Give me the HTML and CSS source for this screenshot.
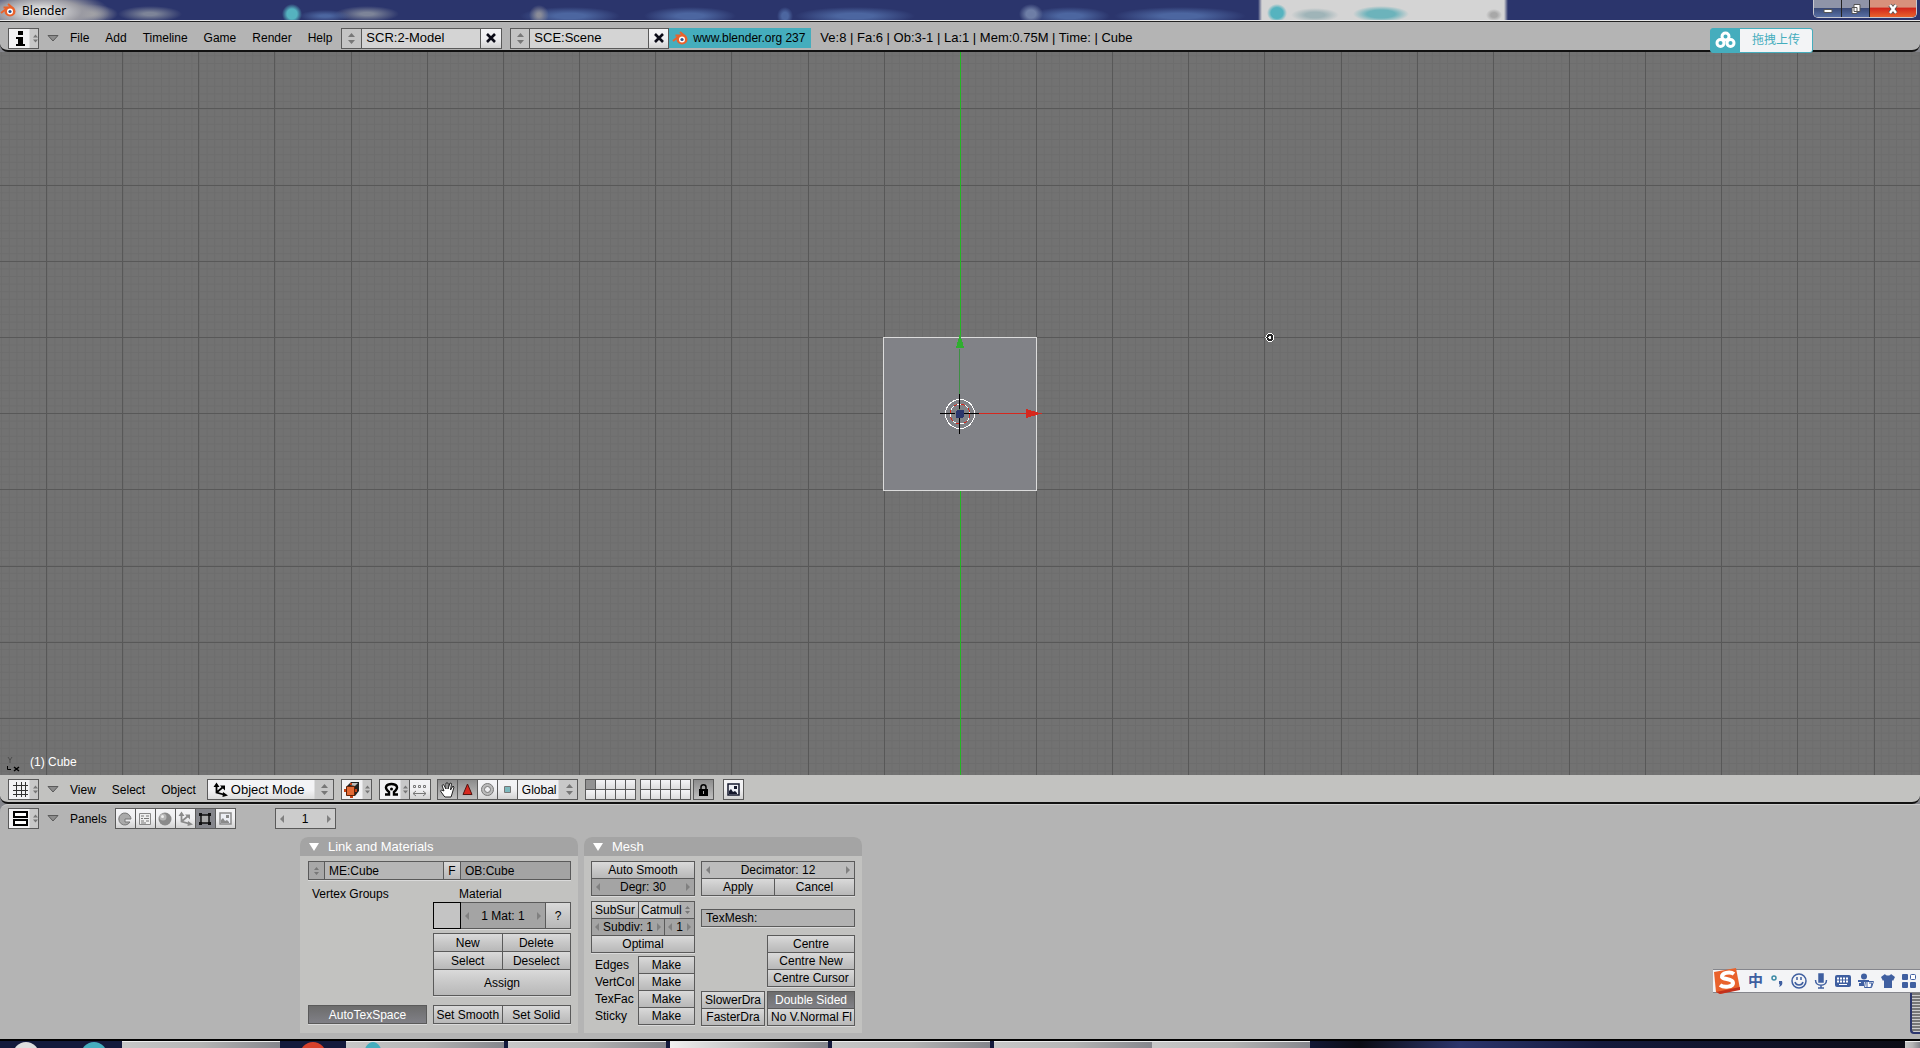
FILE: index.html
```html
<!DOCTYPE html>
<html lang="en">
<head>
	<meta charset="UTF-8">
	<title>Blender</title>
	<link rel="stylesheet" href="styles.css">
</head>
<body>

	<!-- shared icons -->
	<svg class="defs" width="0" height="0">
		<symbol id="updown" viewBox="0 0 7 11"><path d="M0 4h7L3.500 0zM0 7h7L3.500 11z"/></symbol>
		<symbol id="fold" viewBox="0 0 12 7"><path d="M1 .5h10L6 6z" fill="#8c8c8c" stroke="#5a5a5a"/></symbol>
		<symbol id="cross" viewBox="0 0 10 10"><path d="M1 1l8 8M9 1l-8 8" stroke="#0c0c18" stroke-width="2.600"/></symbol>
		<symbol id="logo" viewBox="0 0 16 14">
			<path d="M1 10L8 4.500H3.500M8 1l6 5" fill="none" stroke="#e9622c" stroke-width="2"/>
			<ellipse cx="10" cy="8.500" rx="5.500" ry="5" fill="#e9622c"/>
			<circle cx="10" cy="8.500" r="3" fill="#fff"/>
			<circle cx="10" cy="8.500" r="1.600" fill="#2b4f8c"/>
		</symbol>
		<symbol id="axes" viewBox="0 0 15 15"><path d="M3.500 3v7.500l9 2.500M3.500 10.500l6-5" fill="none" stroke="currentColor" stroke-width="1.800"/><path d="M.5 5l3-4.500 3 4.500zM7 3.500h5v5zM10 10l5 3.500-5.500 1.500z" fill="currentColor"/></symbol>
		<symbol id="image" viewBox="0 0 13 13"><path d="M1 1h11v11H1z" fill="#eceef4" stroke="currentColor" stroke-width="1.500"/><path d="M2 11V8l2-2 2 3 2-1 2 2v1zM7 3h3v3H7z" fill="currentColor"/></symbol>
	</svg>

	<header class="titlebar">
		<svg class="titlebar-logo" width="16" height="14"><use href="#logo"/></svg>
		<h1>Blender</h1>
		<div class="window-buttons">
			<button type="button" aria-label="Minimize"><svg width="12" height="12"><path d="M2 6.500h8v3H2z" fill="#fff" stroke="#555"/></svg></button>
			<button type="button" aria-label="Restore"><svg width="12" height="12"><path d="M4 1.500h6v7H4zM2 4.500h5v6H2z" fill="#fff" stroke="#555"/></svg></button>
			<button type="button" class="close" aria-label="Close"><svg width="14" height="12"><path d="M4 2l6 8M10 2l-6 8" stroke="#555" stroke-width="4"/><path d="M4 2l6 8M10 2l-6 8" stroke="#fff" stroke-width="2.400"/></svg></button>
		</div>
	</header>

	<!-- info header -->
	<nav class="bar info-bar">
		<button type="button" class="editor-type" aria-label="Info window">
			<svg width="21" height="19"><path d="M8 2h5v4H8zM6 8h7v7h2v2H6v-2h2v-5H6z" fill="#000"/></svg>
			<svg class="arrows" width="5" height="9"><use href="#updown"/></svg>
		</button>
		<svg class="fold" width="12" height="7"><use href="#fold"/></svg>
		<a href="#">File</a>
		<a href="#">Add</a>
		<a href="#">Timeline</a>
		<a href="#">Game</a>
		<a href="#">Render</a>
		<a href="#">Help</a>
		<div class="group screen-group">
			<button type="button" class="dim" aria-label="Browse screens"><svg class="arrows" width="7" height="11"><use href="#updown"/></svg></button>
			<input type="text" value="SCR:2-Model" aria-label="Screen">
			<button type="button" aria-label="Delete screen"><svg width="10" height="10"><use href="#cross"/></svg></button>
		</div>
		<div class="group scene-group">
			<button type="button" class="dim" aria-label="Browse scenes"><svg class="arrows" width="7" height="11"><use href="#updown"/></svg></button>
			<input type="text" value="SCE:Scene" aria-label="Scene">
			<button type="button" aria-label="Delete scene"><svg width="10" height="10"><use href="#cross"/></svg></button>
		</div>
		<a class="site" href="#"><svg width="16" height="14"><use href="#logo"/></svg>www.blender.org 237</a>
		<p class="stats">Ve:8 | Fa:6 | Ob:3-1 | La:1 | Mem:0.75M | Time: | Cube</p>
		<button type="button" class="upload">
			<svg width="29" height="23" fill="none" stroke="#fff" stroke-width="3"><circle cx="14.500" cy="7.500" r="3.500"/><circle cx="9.500" cy="14" r="3.500"/><circle cx="19.500" cy="14" r="3.500"/></svg>
			<span>拖拽上传</span>
		</button>
	</nav>

	<!-- 3D view -->
	<main class="view3d">
		<svg class="scene" viewBox="0 0 1920 723" preserveAspectRatio="xMidYMid slice">
			<defs>
				<pattern id="minor" width="7.610" height="7.610" patternUnits="userSpaceOnUse" x="960" y="361">
					<path d="M0 .5h8M.5 0v8" stroke="#6d6d6d"/>
				</pattern>
			</defs>
			<rect width="1920" height="723" fill="#727272"/>
			<rect width="1920" height="723" fill="url(#minor)"/>
			<g stroke="#585858">
				<path d="M0 56.500h1920M0 133.500h1920M0 209.500h1920M0 285.500h1920M0 361.500h1920M0 437.500h1920M0 514.500h1920M0 590.500h1920M0 666.500h1920"/>
				<path d="M46.500 0v723M122.500 0v723M198.500 0v723M274.500 0v723M351.500 0v723M427.500 0v723M503.500 0v723M579.500 0v723M655.500 0v723M731.500 0v723M808.500 0v723M884.500 0v723"/>
				<path d="M1036.500 0v723M1112.500 0v723M1188.500 0v723M1264.500 0v723M1341.500 0v723M1417.500 0v723M1493.500 0v723M1569.500 0v723M1645.500 0v723M1721.500 0v723M1797.500 0v723M1874.500 0v723"/>
			</g>
			<path d="M960.500 0v723" stroke="#22b822"/>
			<rect x="883.500" y="285.500" width="153" height="153" fill="#818287" stroke="#dcdcdc"/>
			<path d="M959.500 361v-64" stroke="#3f8f45"/>
			<path d="M956 296l4-15 4 15z" fill="#2fae2f"/>
			<path d="M979 361.500h48" stroke="#d6281e"/>
			<path d="M1026 357l16 4.500-16 4.500z" fill="#d6281e"/>
			<circle cx="960" cy="362" r="14.500" fill="none" stroke="#fff"/>
			<circle cx="960" cy="362" r="10" fill="none" stroke="#fff"/>
			<circle cx="960" cy="362" r="10" fill="none" stroke="#d6281e" stroke-dasharray="4 4"/>
			<path d="M940 361.500h15M964 361.500h15M959.500 342v15M959.500 366v16" stroke="#000"/>
			<rect x="956" y="358" width="8" height="8" rx="2" fill="#2b356c"/>
			<!-- lamp -->
			<circle cx="1270" cy="285.500" r="4" fill="#222" stroke="#fff"/>
			<circle cx="1270" cy="285.500" r="1.500" fill="#fff"/>
		</svg>
		<svg class="axis-hint" width="14" height="16" fill="none" stroke="#000"><path d="M2 0l2 3 2-3M4 3v3" stroke="#4c4c4c"/><path d="M1.500 9v3.500H5"/><path d="M8 10l5 4M13 10l-5 4" stroke-width="1.500"/></svg>
		<span class="object-name">(1) Cube</span>
	</main>

	<nav class="bar view-bar">
		<button type="button" class="editor-type" aria-label="3D view window">
			<svg width="21" height="19"><path d="M3 5.500h15M3 10.500h15M3 14.500h15M6.500 2v15M11.500 2v15M15.500 2v15" stroke="#333"/></svg>
			<svg class="arrows" width="5" height="9"><use href="#updown"/></svg>
		</button>
		<svg class="fold" width="12" height="7"><use href="#fold"/></svg>
		<a href="#">View</a>
		<a href="#">Select</a>
		<a href="#">Object</a>
		<label class="dropdown mode">
			<svg width="15" height="15"><use href="#axes"/></svg>
			<select aria-label="Mode"><option>Object Mode</option></select>
			<svg class="arrows" width="7" height="11"><use href="#updown"/></svg>
		</label>
		<button type="button" class="editor-type draw-type" aria-label="Draw type">
			<svg width="21" height="19"><path d="M5 6l4-4h8v9l-4 5H5z" fill="#222"/><path d="M8 5l2-2h6l-3 3z" fill="#bbb"/><path d="M4.500 6.500h8v9h-8z" fill="#e26a35" stroke="#5d2209"/><path d="M2 9h2v3H2zM13 9h2v3h-2zM8 16h3v2H8zM8 3h2v2H8z" fill="#c23f12"/></svg>
			<svg class="arrows" width="5" height="9"><use href="#updown"/></svg>
		</button>
		<div class="group magnet-group">
			<button type="button" class="editor-type" aria-label="Pivot">
				<svg width="21" height="19"><path d="M4 14.500h4V12C2 7 6 4 10.500 4S19 7 13 12v2.500h4" fill="none" stroke="#000" stroke-width="2.400"/><circle cx="10.500" cy="9" r="1.500"/></svg>
				<svg class="arrows" width="5" height="9"><use href="#updown"/></svg>
			</button>
			<button type="button" aria-label="Move centers only"><svg width="15" height="14" fill="none" stroke="#777"><path d="M1.500 2.500h2v2h-2zM6.500 2.500h2v2h-2zM11.500 2.500h2v2h-2zM1 10.500h13M4 8l-3 2.500L4 13M11 8l3 2.500-3 2.500"/></svg></button>
		</div>
		<div class="group manipulators">
			<button type="button" class="on" aria-label="Manipulator"><svg width="17" height="17"><path d="M5 15L1.500 10l1-1L5 10 3 4.500l1.500-1L7 8V2h2v6l2-6 1.500.5L11.500 9 14 5l1 1-2 7-1 3H6z" fill="#fff" stroke="#222"/></svg></button>
			<button type="button" class="on" aria-label="Translate"><svg width="15" height="15"><path d="M7.500 2L12 12.500H3z" fill="#d6281e" stroke="#531410"/></svg></button>
			<button type="button" aria-label="Rotate"><svg width="15" height="15" fill="none" stroke="#777"><circle cx="7.500" cy="7.500" r="4.500" stroke="#bbb" stroke-width="3"/><circle cx="7.500" cy="7.500" r="6"/><circle cx="7.500" cy="7.500" r="3"/></svg></button>
			<button type="button" aria-label="Scale"><svg width="15" height="15"><path d="M4.500 4.500h6v6h-6z" fill="#7bb8bd" stroke="#777"/></svg></button>
			<label class="dropdown">
				<select aria-label="Orientation"><option>Global</option></select>
				<svg class="arrows" width="7" height="11"><use href="#updown"/></svg>
			</label>
		</div>
		<div class="layers">
			<input type="checkbox" aria-label="Layer 1" checked><input type="checkbox" aria-label="Layer 2"><input type="checkbox" aria-label="Layer 3"><input type="checkbox" aria-label="Layer 4"><input type="checkbox" aria-label="Layer 5">
			<input type="checkbox" aria-label="Layer 11"><input type="checkbox" aria-label="Layer 12"><input type="checkbox" aria-label="Layer 13"><input type="checkbox" aria-label="Layer 14"><input type="checkbox" aria-label="Layer 15">
		</div>
		<div class="layers">
			<input type="checkbox" aria-label="Layer 6"><input type="checkbox" aria-label="Layer 7"><input type="checkbox" aria-label="Layer 8"><input type="checkbox" aria-label="Layer 9"><input type="checkbox" aria-label="Layer 10">
			<input type="checkbox" aria-label="Layer 16"><input type="checkbox" aria-label="Layer 17"><input type="checkbox" aria-label="Layer 18"><input type="checkbox" aria-label="Layer 19"><input type="checkbox" aria-label="Layer 20">
		</div>
		<div class="group lock-group">
			<button type="button" class="on" aria-label="Lock layers"><svg width="11" height="14"><path d="M3 7V4c0-3 5-3 5 0v3" fill="none" stroke="#000" stroke-width="1.500"/><path d="M1 6h9v7H1z"/><path d="M5 8h1v3H5z" fill="#aaa"/></svg></button>
		</div>
		<div class="group render-group">
			<button type="button" aria-label="Render window"><svg class="dark" width="13" height="13"><use href="#image"/></svg></button>
		</div>
	</nav>

	<!-- buttons window -->
	<section class="buttons-window">
		<nav class="bar panels-bar">
			<button type="button" class="editor-type" aria-label="Buttons window">
				<svg width="21" height="19" fill="#fff" stroke="#000" stroke-width="2"><path d="M4 3h13v5H4zM4 11h13v5H4z"/></svg>
				<svg class="arrows" width="5" height="9"><use href="#updown"/></svg>
			</button>
			<svg class="fold" width="12" height="7"><use href="#fold"/></svg>
			<a href="#">Panels</a>
			<div class="group contexts">
				<button type="button" aria-label="Logic"><svg width="14" height="14"><path d="M12 4a6 6 0 1 0 0 6H7V7h6a6 6 0 0 0-1-3z" fill="#aaa" stroke="#777"/></svg></button>
				<button type="button" aria-label="Script"><svg width="14" height="14"><path d="M1.500 1.500h11v11h-11z" fill="#eee" stroke="#888"/><path d="M3 4h3M8 4h3M3 6.500h2M6 6.500h5M3 9h3M8 9h3M3 11h5" stroke="#777"/></svg></button>
				<button type="button" aria-label="Shading"><svg width="14" height="14"><circle cx="7" cy="7" r="6.500" fill="#8a8a8a"/><circle cx="5" cy="5" r="3.500" fill="#b5b5b5"/><circle cx="4.500" cy="4.500" r="1.500" fill="#eee"/></svg></button>
				<button type="button" class="grey" aria-label="Object"><svg width="15" height="15"><use href="#axes"/></svg></button>
				<button type="button" class="active" aria-label="Editing"><svg width="14" height="14"><path d="M3 3h8v8H3z" fill="#aaa" stroke="#111" stroke-width="1.500"/><path d="M1 1h3v3H1zM10 1h3v3h-3zM1 10h3v3H1zM10 10h3v3h-3z" fill="#111"/></svg></button>
				<button type="button" class="grey" aria-label="Scene"><svg width="13" height="13"><use href="#image"/></svg></button>
			</div>
			<div class="group frame"><div class="number"><span class="left"></span><input type="text" value="1" aria-label="Frame"><span class="right"></span></div></div>
		</nav>

		<div class="panels">
			<section class="panel">
				<h2>Link and Materials</h2>
				<div class="panel-body">
					<div class="group link-row">
						<button type="button" class="mid" aria-label="Browse meshes"><svg class="arrows" width="5" height="8"><use href="#updown"/></svg></button>
						<input type="text" value="ME:Cube" aria-label="Mesh name">
						<button type="button">F</button>
						<input class="ob" type="text" value="OB:Cube" aria-label="Object name">
					</div>
					<div class="link-columns">
						<div class="vertex-groups">
							<h3>Vertex Groups</h3>
							<div class="group"><button type="button" class="pressed">AutoTexSpace</button></div>
						</div>
						<div class="materials">
							<h3>Material</h3>
							<div class="group material-row">
								<button type="button" class="swatch" aria-label="Material color"></button>
								<div class="number"><span class="left"></span><input type="text" value="1 Mat: 1" aria-label="Material index"><span class="right"></span></div>
								<button type="button">?</button>
							</div>
							<div class="group pair material-buttons">
								<button type="button">New</button>
								<button type="button">Delete</button>
								<button type="button">Select</button>
								<button type="button">Deselect</button>
								<button type="button" class="assign">Assign</button>
							</div>
							<div class="group pair">
								<button type="button">Set Smooth</button>
								<button type="button">Set Solid</button>
							</div>
						</div>
					</div>
				</div>
			</section>

			<section class="panel">
				<h2>Mesh</h2>
				<div class="panel-body mesh-columns">
					<div class="mesh-left">
						<div class="group">
							<button type="button">Auto Smooth</button>
							<div class="number"><span class="left"></span><input type="text" value="Degr: 30" aria-label="Degrees"><span class="right"></span></div>
						</div>
						<div class="group subsurf">
							<button type="button">SubSur</button>
							<label class="dropdown"><select aria-label="Subdivision type"><option>Catmull</option></select><svg class="arrows" width="5" height="8"><use href="#updown"/></svg></label>
							<div class="number subdiv"><span class="left"></span><input type="text" value="Subdiv: 1" aria-label="Subdivisions"><span class="right"></span></div>
							<div class="number"><span class="left"></span><input type="text" value="1" aria-label="Render subdivisions"><span class="right"></span></div>
							<button type="button" class="optimal">Optimal</button>
						</div>
						<div class="make">
							<div class="make-labels"><span>Edges</span><span>VertCol</span><span>TexFac</span><span>Sticky</span></div>
							<div class="group">
								<button type="button" aria-label="Make edges">Make</button>
								<button type="button" aria-label="Make vertex colors">Make</button>
								<button type="button" aria-label="Make texture faces">Make</button>
								<button type="button" aria-label="Make sticky">Make</button>
							</div>
						</div>
					</div>
					<div class="mesh-right">
						<div class="group decimator">
							<div class="number light wide"><span class="left"></span><input type="text" value="Decimator: 12" aria-label="Decimator"><span class="right"></span></div>
							<button type="button">Apply</button>
							<button type="button">Cancel</button>
						</div>
						<div class="group texmesh"><input type="text" value="TexMesh:" aria-label="TexMesh"></div>
						<div class="group centre">
							<button type="button">Centre</button>
							<button type="button">Centre New</button>
							<button type="button">Centre Cursor</button>
						</div>
						<div class="draw-row">
							<div class="group">
								<button type="button">SlowerDra</button>
								<button type="button">FasterDra</button>
							</div>
							<div class="group">
								<button type="button" class="pressed">Double Sided</button>
								<button type="button" class="flip">No V.Normal Fl</button>
							</div>
						</div>
					</div>
				</div>
			</section>
		</div>

		<!-- desktop widgets floating over the window -->
		<div class="tray-meter"></div>
		<div class="ime">
			<svg class="ime-logo" width="28" height="28"><path d="M1 5L23 1l4 21-20 5-4-2z" fill="#e9622c"/><path d="M3 25l24-5v3L7 27z" fill="#c2301c"/><path d="M21 7c-4-3-13-1-12 3 1 3 11 1 11 6 0 4-9 5-13 2" fill="none" stroke="#fff" stroke-width="4"/></svg>
			<span>中</span>
			<svg width="14" height="16"><circle cx="4" cy="5" r="2" fill="none" stroke="#3b8aa5" stroke-width="1.500"/><path d="M9 8h3c1 3 0 5-3 6 1-2 1-3 0-3z" fill="#3f5fa0"/></svg>
			<svg width="16" height="16" fill="none" stroke="#3f5fa0" stroke-width="1.500"><circle cx="8" cy="8" r="7"/><path d="M4 9c1 4 7 4 8 0M6 4v3M10 4v3"/></svg>
			<svg width="14" height="16" fill="none" stroke="#3f5fa0" stroke-width="1.500"><path d="M5 1h4v8H5z" fill="#3f5fa0"/><path d="M1.500 7c0 7 11 7 11 0M7 12v3M4 15h6"/></svg>
			<svg width="16" height="12"><rect width="16" height="12" rx="2" fill="#3f5fa0"/><path d="M2 3.500h12M2 6.500h12" stroke="#fff" stroke-width="2" stroke-dasharray="2 1"/><path d="M4 9.500h8" stroke="#fff"/></svg>
			<svg width="16" height="16" fill="#3f5fa0"><circle cx="6" cy="3.500" r="3"/><path d="M0 7h11v2H6v4H1V10h2V9H0z"/><path d="M7.500 8.500h8l-2 6h-7z" fill="#fff" stroke="#3f5fa0"/><path d="M9 9v5M11 10h3l-1 4" fill="none" stroke="#3f5fa0"/></svg>
			<svg width="14" height="14" fill="#3f5fa0"><path d="M0 3l4-3c1 2 5 2 6 0l4 3-2 4-1-1v8H3V6L2 7z"/></svg>
			<svg width="14" height="14" fill="#3f5fa0"><rect width="6" height="6" rx="1"/><rect x="8.500" y=".5" width="5" height="5" rx="1" fill="#fff" stroke="#3f5fa0"/><rect y="8" width="6" height="6" rx="1"/><rect x="8" y="8" width="6" height="6" rx="1"/></svg>
		</div>
	</section>

	<footer class="taskbar">
		<div class="quick"><i class="orb"></i><i class="bird"></i></div>
		<button type="button" class="joined" aria-label="Task 1"></button>
		<div class="pinned"><i class="red"></i></div>
		<button type="button" aria-label="Task 2"><i class="teal"></i></button>
		<button type="button" aria-label="Task 3"></button>
		<button type="button" class="lit" aria-label="Task 4"></button>
		<button type="button" aria-label="Task 5"></button>
		<button type="button" class="joined" aria-label="Task 6"></button>
		<button type="button" aria-label="Task 7"></button>
		<span class="clock">14:51</span>
		<button type="button" class="show-desktop" aria-label="Show desktop"></button>
	</footer>

</body>
</html>
```

FILE: styles.css
```css
/* all */
* {
	margin: 0;
	padding: 0;
	box-sizing: border-box;
}

body {
	display: flex;
	flex-direction: column;
	height: 100vh;
	overflow: hidden;
	background: #85868c;
	color: #000;
	font: 12px/16px "Liberation Sans", "Noto Sans CJK SC", sans-serif;
}

button, input, select {
	font: inherit;
	color: inherit;
	border: 0;
	border-radius: 0;
	min-width: 0;
}

button, .dropdown {
	display: flex;
	align-items: center;
	justify-content: center;
	white-space: nowrap;
	overflow: hidden;
	background: linear-gradient(#f4f4f6, #f0f0f2 50%, #d2d2d2);
}

select {
	appearance: none;
	background: none;
}

svg {
	flex: none;
}

.defs {
	position: absolute;
}

.arrows {
	fill: #777;
}

/* title bar */
.titlebar {
	display: flex;
	flex: none;
	height: 20px;
	overflow: hidden;
	background:
		radial-gradient(ellipse 70px 22px at 40px 12px, #dcdcdc 20%, #9a9aa2 60%, transparent),
		radial-gradient(ellipse 30px 10px at 88px 14px, #aaa 20%, transparent),
		radial-gradient(ellipse 32px 8px at 150px 14px, #7d8498 20%, transparent),
		radial-gradient(ellipse 10px 10px at 292px 14px, #55b3bf 50%, transparent),
		radial-gradient(ellipse 26px 6px at 325px 16px, #4c66a0 20%, transparent),
		radial-gradient(ellipse 32px 8px at 367px 14px, #7d8498 20%, transparent),
		radial-gradient(ellipse 10px 10px at 539px 15px, #8a8c98 20%, transparent),
		radial-gradient(ellipse 50px 9px at 570px 16px, #4c66a0 30%, transparent),
		radial-gradient(ellipse 46px 9px at 690px 16px, #4c66a0 30%, transparent),
		radial-gradient(ellipse 8px 9px at 785px 16px, #4c66a0 40%, transparent),
		radial-gradient(ellipse 60px 9px at 855px 16px, #4c66a0 30%, transparent),
		radial-gradient(ellipse 12px 10px at 1031px 14px, #6e7ea6 40%, transparent),
		radial-gradient(ellipse 40px 9px at 1070px 16px, #4c66a0 30%, transparent),
		radial-gradient(ellipse 66px 9px at 1180px 16px, #4c66a0 30%, transparent),
		radial-gradient(ellipse 10px 9px at 1277px 13px, #55b3bf 60%, transparent),
		radial-gradient(ellipse 24px 7px at 1315px 15px, #9fb4b8 40%, transparent),
		radial-gradient(ellipse 28px 8px at 1381px 14px, #6cb3bb 50%, transparent),
		radial-gradient(ellipse 8px 6px at 1494px 15px, #a8a8a8 40%, transparent),
		linear-gradient(90deg, transparent 1258px, #d4d4d4 1262px, #d4d4d4 1504px, transparent 1508px),
		#2b356c;
}

.titlebar-logo {
	margin-top: 3px;
}

h1 {
	margin-left: 6px;
	font: 12px/21px "Noto Sans", sans-serif;
}

.window-buttons {
	display: flex;
	height: 18px;
	margin: 0 3px 0 auto;
	border: 1px solid #c8c8d0;
	border-top: 0;
	border-radius: 0 0 5px 5px;
	overflow: hidden;
}

.window-buttons button {
	width: 28px;
	border-right: 1px solid #222;
	background: linear-gradient(#8f94a8 45%, #3a4a78 50%, #5870a4);
}

.window-buttons .close {
	width: 46px;
	border: 0;
	background: linear-gradient(#d8917c 40%, #d2281c 50%, #e9622c);
}

/* header bars */
.bar {
	display: flex;
	flex: none;
	align-items: center;
	position: relative;
	padding-left: 8px;
}

.bar a {
	color: inherit;
	text-decoration: none;
	margin-right: 16px;
}

.info-bar {
	height: 32px;
	padding-top: 5px;
	background: #b4b4b4;
	border-top: 1px solid #e8e8e8;
	border-bottom: 2px solid #111;
	border-radius: 0 0 8px 8px;
	box-shadow: inset 0 1px #222;
}

.view-bar {
	height: 29px;
	padding-top: 2px;
	background: #c2c2c0;
	border-bottom: 2px solid #111;
	border-radius: 0 0 8px 8px;
}

.panels-bar {
	height: 27px;
}

.editor-type {
	width: 31px;
	height: 21px;
	border: 1px solid #5a5a5a;
	background: linear-gradient(90deg, #f2f2f4 20px, #c8c8c8 21px);
}

.editor-type .arrows {
	margin-left: 2px;
}

.fold {
	margin: 0 11px 0 8px;
}

/* a group is a set of cells with one dark line between them */
.group {
	display: grid;
	grid-auto-rows: 17px;
	gap: 1px;
	padding: 1px;
	background: #5a5a5a;
	box-shadow: 0 1px #dadada;
}

.bar .group {
	grid-auto-rows: 19px;
	box-shadow: none;
}

.group input[type="text"] {
	width: 100%;
	padding-left: 4px;
	background: #d4d4d4;
}

.dim {
	background: #c4c4c4;
}

.on {
	background: linear-gradient(#8c8c8c, #c0c0c0);
}

.active {
	background: #85868c;
}

.grey {
	color: #8a8a8a;
}

.dark {
	color: #14182c;
}

.screen-group, .scene-group, .stats {
	font-size: 13px;
}

.screen-group {
	grid-template-columns: 19px 118px 20px;
	margin-left: -7px;
}

.scene-group {
	grid-template-columns: 18px 118px 19px;
	margin-left: 8px;
}

.bar .site {
	display: flex;
	align-items: center;
	gap: 5px;
	width: 142px;
	height: 20px;
	margin: 0;
	padding-left: 3px;
	background: #45adbd;
	white-space: nowrap;
	overflow: hidden;
}

.stats {
	margin-left: 9px;
}

.upload {
	position: absolute;
	z-index: 2;
	top: 7px;
	right: 107px;
	width: 103px;
	height: 25px;
	border: 1px solid #45adbd;
	border-radius: 3px;
	background: #45adbd;
	color: #45adbd;
}

.upload span {
	flex: 1;
	background: #f3f4f6;
	line-height: 23px;
}

/* 3D view */
.view3d {
	position: relative;
	flex: 1;
	min-height: 0;
}

.scene {
	display: block;
	width: 100%;
	height: 100%;
	shape-rendering: crispEdges;
}

.axis-hint {
	position: absolute;
	left: 6px;
	bottom: 2px;
}

.object-name {
	position: absolute;
	left: 30px;
	bottom: 5px;
	color: #fff;
}

/* 3D view header */
.mode {
	width: 127px;
	height: 21px;
	margin-left: -5px;
	padding: 0 5px;
	border: 1px solid #5a5a5a;
	background: linear-gradient(90deg, transparent 106px, #c8c8c8 107px), linear-gradient(#f4f4f6 50%, #dcdcdc);
	font-size: 13px;
}

.mode select {
	flex: 1;
	margin-left: 3px;
}

.draw-type {
	margin: 0 7px;
}

.magnet-group {
	grid-template-columns: 29px 20px;
}

.magnet-group .editor-type {
	width: 29px;
	height: 19px;
	border: 0;
}

.magnet-group .editor-type .arrows {
	margin-left: 1px;
}

.manipulators {
	grid-template-columns: repeat(4, 19px) 59px;
	margin: 0 7px 0 6px;
}

.manipulators .dropdown {
	justify-content: space-between;
	padding: 0 4px;
	background: linear-gradient(90deg, #f0f0f2 40px, #c8c8c8 41px);
}

.layers {
	display: grid;
	grid-template-columns: repeat(5, 9px);
	grid-auto-rows: 9px;
	gap: 1px;
	padding: 1px;
	margin-right: 4px;
	background: #5a5a5a;
}

.layers input {
	appearance: none;
	background: linear-gradient(#f4f4f6, #dcdcdc);
}

.layers input:checked {
	background: #929292;
}

.lock-group, .render-group {
	grid-template-columns: 19px;
}

.lock-group {
	margin-left: -2px;
}

.render-group {
	margin-left: 9px;
}

/* buttons window */
.buttons-window {
	position: relative;
	flex: none;
	height: 235px;
	background: #b4b4b4;
	border-top: 1px solid #ccc;
	border-radius: 8px 0 0 0;
}

.panels-bar a {
	margin-right: 8px;
}

.contexts {
	grid-template-columns: repeat(6, 19px);
}

.frame {
	grid-template-columns: 59px;
	margin-left: 39px;
}

.number {
	display: flex;
	align-items: center;
	justify-content: space-between;
	padding: 0 4px;
	background: #a4a4a4;
}

.group .number input {
	flex: 1;
	padding: 0;
	background: none;
	text-align: center;
}

.number .left, .number .right {
	border: 4px solid transparent;
}

.number .left {
	border-left-width: 0;
	border-right-color: #808080;
}

.number .right {
	border-right-width: 0;
	border-left-color: #808080;
}

.frame .number {
	background: #ccc;
}

.panels {
	display: flex;
	gap: 6px;
	margin: 5px 0 0 300px;
}

.panel {
	width: 278px;
	height: 196px;
	background: #c2c2c0;
	border-radius: 8px 8px 0 0;
	overflow: hidden;
}

h2 {
	height: 19px;
	padding-left: 9px;
	background: #a4a4a4;
	color: #fff;
	font: 13px/20px "Liberation Sans", sans-serif;
}

h2::before {
	content: "";
	display: inline-block;
	margin-right: 9px;
	border: 5px solid transparent;
	border-top: 8px solid #fff;
	border-bottom: 0;
}

h3 {
	font-size: 12px;
	font-weight: normal;
}

.panel-body {
	padding: 5px 7px 0 8px;
}

.panel button {
	background: linear-gradient(#dadada, #c8c8c8 50%, #b8b8b8);
}

.panel .mid {
	background: #a8a8a8;
}

.panel .pressed {
	background: linear-gradient(#6c6c6c, #808086);
	color: #fff;
}

.link-row {
	grid-template-columns: 15px 118px 16px 1fr;
}

.panel .link-row input {
	background: #b6b6b6;
}

.panel .link-row .ob {
	background: #a4a4a4;
}

.link-columns {
	display: flex;
	gap: 6px;
	padding-top: 6px;
}

.vertex-groups {
	display: flex;
	flex-direction: column;
	justify-content: space-between;
	width: 119px;
}

.vertex-groups h3 {
	padding-left: 4px;
}

.materials {
	flex: 1;
}

.materials h3 {
	padding-left: 26px;
}

.material-row {
	grid-template-columns: 26px 1fr 24px;
	grid-auto-rows: 25px;
}

.panel .swatch {
	background: #c4c4c4;
	outline: 1px solid #000;
}

.pair {
	grid-template-columns: 1fr 1fr;
}

.material-buttons {
	grid-template-rows: 17px 17px 25px;
	margin: 4px 0 9px;
}

.assign {
	grid-column: span 2;
}

.mesh-columns {
	display: flex;
	gap: 6px;
	padding-left: 7px;
}

.mesh-columns .group {
	grid-auto-rows: 16px;
}

.mesh-left {
	width: 104px;
}

.subsurf {
	grid-template-columns: 46px 25px 29px;
	margin: 5px 0 3px;
}

.subsurf .dropdown {
	grid-column: span 2;
	justify-content: space-between;
	padding: 0 4px 0 2px;
	background: linear-gradient(90deg, #d0d0d0 40px, #b0b0b0 41px);
}

.subsurf .number {
	padding: 0 3px;
}

.subdiv {
	grid-column: span 2;
}

.optimal {
	grid-column: span 3;
}

.make {
	display: grid;
	grid-template-columns: 47px 1fr;
}

.make-labels {
	display: grid;
	grid-auto-rows: 17px;
	padding-left: 4px;
	line-height: 18px;
}

.mesh-right {
	flex: 1;
}

.decimator {
	grid-template-columns: 72px 1fr;
}

.wide {
	grid-column: span 2;
}

.panel .light {
	background: #bcbcbc;
}

.texmesh {
	margin: 13px 0 8px;
}

.panel .texmesh input {
	background: #b2b2b2;
}

.centre {
	width: 88px;
	margin: 0 0 4px auto;
}

.draw-row {
	display: grid;
	grid-template-columns: 64px 88px;
	justify-content: space-between;
}

.flip {
	justify-content: flex-start;
	padding-left: 3px;
}

/* desktop widgets */
.ime {
	position: absolute;
	right: 0;
	bottom: 46px;
	display: flex;
	align-items: center;
	gap: 7px;
	height: 24px;
	padding-right: 4px;
	background: #f3f4f6;
	border: 1px solid #85868c;
	border-width: 1px 0;
	color: #3f5fa0;
	font-size: 15px;
	font-weight: bold;
}

.tray-meter {
	position: absolute;
	right: 0;
	bottom: 5px;
	width: 10px;
	height: 44px;
	border: 2px solid #2b356c;
	border-right: 0;
	border-radius: 0 0 0 4px;
	background: repeating-linear-gradient(#ccc 0 1px, #777 1px 3px);
}

/* taskbar */
.taskbar {
	display: flex;
	flex: none;
	height: 9px;
	border-top: 2px solid #000;
	background: linear-gradient(90deg, #141a3c 0 1300px, #0c0c14 1360px, #2b356c 1460px, #141a3c 1600px, #0c0c14);
	overflow: hidden;
}

.taskbar button {
	flex: none;
	width: 158px;
	margin-right: 4px;
	background: linear-gradient(90deg, #c8c8c8, #b4b4b4 50%, #85868c);
	box-shadow: inset 0 1px #eee;
}

.taskbar .joined {
	margin-right: 0;
}

.taskbar .lit {
	background: linear-gradient(90deg, #f0f0f0, #b4b4b4 60%, #85868c);
}

.quick {
	display: flex;
	gap: 42px;
	width: 122px;
	padding-left: 13px;
}

.pinned {
	width: 66px;
	padding-left: 20px;
}

.taskbar i {
	display: block;
	flex: none;
	width: 26px;
	height: 26px;
	margin-top: 1px;
	border-radius: 50%;
}

.orb {
	background: #ddd;
}

.bird, .teal {
	background: #45adbd;
}

.red {
	background: #d6402a;
}

.taskbar .teal {
	width: 18px;
	margin: 20px 104px 0 0;
}

.clock {
	margin: 4px 44px 0 auto;
	color: #fff;
}

.taskbar .show-desktop {
	width: 15px;
	margin-right: 0;
}
```
